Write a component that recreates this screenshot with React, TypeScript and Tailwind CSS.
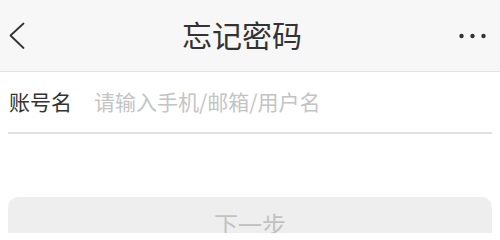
import React from "react";

export default function App() {
  return (
    <div className="w-[500px] h-[233px] overflow-hidden bg-white" style={{ fontFamily: '"Noto Sans CJK SC", "Noto Sans", sans-serif' }}>
      <div className="h-[72px] bg-[#f7f7f7] border-b border-[#e3e3e3] flex items-center px-[10px]">
        <div className="w-[30px] flex items-center">
          <svg width="16" height="28" viewBox="0 0 16 28" className="ml-[-1px]">
            <polyline points="14.5,1.5 1.5,13.5 14.5,26" fill="none" stroke="#333" strokeWidth="1.8" strokeLinecap="round" strokeLinejoin="round" />
          </svg>
        </div>
        <div className="flex-1 text-center text-[30px] leading-none text-[#333] mt-[-4px]">忘记密码</div>
        <div className="w-[46px] flex items-center justify-end pr-[3px]">
          <svg width="28" height="6" viewBox="0 0 28 6">
            <circle cx="2.5" cy="3" r="2.2" fill="#333" />
            <circle cx="13.5" cy="3" r="2.2" fill="#333" />
            <circle cx="24.5" cy="3" r="2.2" fill="#333" />
          </svg>
        </div>
      </div>
      <div className="mx-2 h-[62px] border-b-2 border-[#e0e0e0] flex items-center pl-[1px]">
        <span className="text-[21px] leading-none text-[#333] mt-[-2px]">账号名</span>
        <span className="ml-[22px] text-[21px] leading-none text-[#c4c4c4] mt-[-2px]">请输入手机/邮箱/用户名</span>
      </div>
      <div className="mx-2 mt-[63px] h-[50px] rounded-[10px] bg-[#eeeeee] flex items-center justify-center">
        <span className="text-[24px] leading-none text-[#c2c2c2] mt-[4px]">下一步</span>
      </div>
    </div>
  );
}
